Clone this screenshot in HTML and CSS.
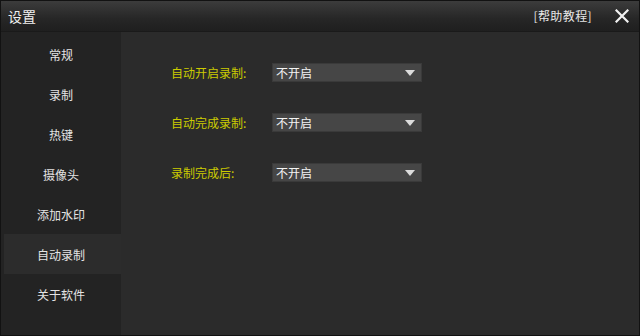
FILE: index.html
```html
<!DOCTYPE html>
<html lang="zh">
<head>
<meta charset="utf-8">
<title>设置</title>
<link rel="stylesheet" href="styles.css">
</head>
<body>
<div class="window">
  <header class="titlebar">
    <span class="title">设置</span>
    <div class="title-actions">
      <span class="help">[帮助教程]</span>
      <svg class="close" width="14" height="14" viewBox="0 0 14 14"><path d="M1.5 1.5 L12.5 12.5 M12.5 1.5 L1.5 12.5" stroke="#f2f2f2" stroke-width="2.2" stroke-linecap="square"/></svg>
    </div>
  </header>
  <div class="body">
    <nav class="sidebar">
      <div class="nav-item">常规</div>
      <div class="nav-item">录制</div>
      <div class="nav-item">热键</div>
      <div class="nav-item">摄像头</div>
      <div class="nav-item">添加水印</div>
      <div class="nav-item active">自动录制</div>
      <div class="nav-item">关于软件</div>
    </nav>
    <main class="content">
      <div class="row">
        <span class="label">自动开启录制:</span>
        <div class="select"><span>不开启</span><i class="arrow"></i></div>
      </div>
      <div class="row">
        <span class="label">自动完成录制:</span>
        <div class="select"><span>不开启</span><i class="arrow"></i></div>
      </div>
      <div class="row">
        <span class="label">录制完成后:</span>
        <div class="select"><span>不开启</span><i class="arrow"></i></div>
      </div>
    </main>
  </div>
</div>
</body>
</html>
```
FILE: styles.css
```css
* { box-sizing: border-box; }
html, body { margin: 0; padding: 0; background: #111; }
body { font-family: "Noto Sans CJK SC", "Noto Sans", sans-serif; }
.window {
  width: 640px;
  height: 336px;
  border: 1px solid #121212;
  display: flex;
  flex-direction: column;
  background: #2b2b2b;
}
.titlebar {
  height: 31px;
  flex: none;
  display: flex;
  align-items: center;
  justify-content: space-between;
  padding: 0 10px 0 7px;
  background: linear-gradient(#3c3c3c, #262626 60%, #1f1f1f);
  border-bottom: 1px solid #1a1a1a;
}
.title { color: #f0f0f0; font-size: 14px; line-height: 1; }
.title-actions { display: flex; align-items: center; gap: 23px; }
.help { color: #e6e6e6; font-size: 12px; line-height: 1; letter-spacing: 0.4px; }
.close { display: block; }
.body { flex: 1; display: flex; min-height: 0; }
.sidebar {
  width: 120px;
  flex: none;
  background: #232323;
  padding-top: 2px;
  display: flex;
  flex-direction: column;
}
.nav-item {
  height: 40px;
  margin-left: 3px;
  display: flex;
  align-items: center;
  justify-content: center;
  color: #e4e4e4;
  font-size: 12px;
  padding-right: 3px;
}
.nav-item.active { background: #2c2c2c; }
.content {
  flex: 1;
  background: #2b2b2b;
  padding: 31px 0 0 50px;
  display: flex;
  flex-direction: column;
  gap: 31px;
}
.row { display: flex; align-items: center; height: 19px; }
.label { width: 101px; color: #cccc00; font-size: 12px; }
.select {
  width: 150px;
  height: 19px;
  background: #464646;
  border: 1px solid #3a3a3a;
  display: flex;
  align-items: center;
  justify-content: space-between;
  padding: 0 6px 0 3px;
  color: #f4f4f4;
  font-size: 12px;
}
.arrow {
  width: 0;
  height: 0;
  border-left: 5px solid transparent;
  border-right: 5px solid transparent;
  border-top: 6px solid #dcdcdc;
}
```
